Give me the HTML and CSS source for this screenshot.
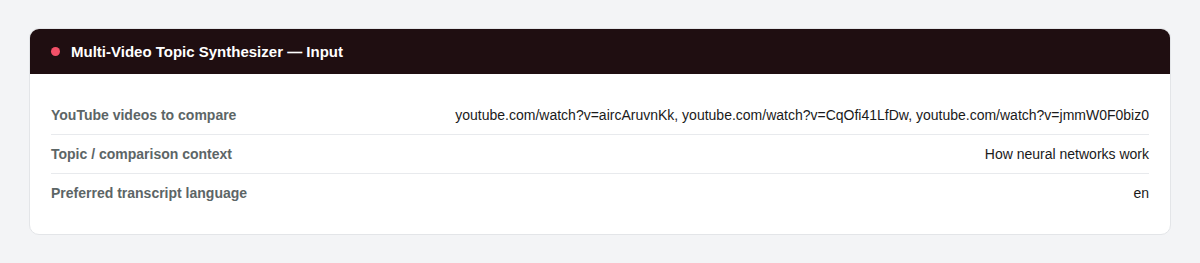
FILE: index.html
```html
<!DOCTYPE html>
<html lang="en">
<head>
<meta charset="utf-8">
<link rel="stylesheet" href="styles.css">
</head>
<body>
<div class="card">
  <div class="card-header">
    <span class="dot"></span>
    <span class="title">Multi-Video Topic Synthesizer — Input</span>
  </div>
  <div class="card-body">
    <div class="row">
      <div class="label">YouTube videos to compare</div>
      <div class="value">youtube.com/watch?v=aircAruvnKk, youtube.com/watch?v=CqOfi41LfDw, youtube.com/watch?v=jmmW0F0biz0</div>
    </div>
    <div class="row">
      <div class="label">Topic / comparison context</div>
      <div class="value">How neural networks work</div>
    </div>
    <div class="row">
      <div class="label">Preferred transcript language</div>
      <div class="value">en</div>
    </div>
  </div>
</div>
</body>
</html>
```
FILE: styles.css
```css
* { box-sizing: border-box; }
html, body { margin: 0; padding: 0; }
body {
  background: #f3f4f6;
  font-family: "Liberation Sans", Arial, Helvetica, sans-serif;
  padding: 28px 29px;
  height: 263px;
}
.card {
  background: #ffffff;
  border: 1px solid #e3e5e8;
  border-radius: 10px;
  overflow: hidden;
}
.card-header {
  background: #1f0e11;
  height: 46px;
  display: flex;
  align-items: center;
  padding: 0 22px;
  gap: 11px;
  margin: -1px -1px 0 -1px;
}
.dot {
  width: 9px;
  height: 9px;
  border-radius: 50%;
  background: #f25068;
  flex: none;
}
.title {
  color: #ffffff;
  font-weight: 700;
  font-size: 15px;
}
.card-body {
  padding: 22px 21px 22px 21px;
}
.row {
  display: flex;
  justify-content: space-between;
  align-items: center;
  height: 39px;
  border-bottom: 1px solid #e8eaed;
  font-size: 14px;
}
.row:last-child {
  border-bottom: none;
  height: 38px;
}
.label {
  color: #5c6566;
  font-weight: 700;
}
.value {
  color: #1a1a1a;
  text-align: right;
}
```
